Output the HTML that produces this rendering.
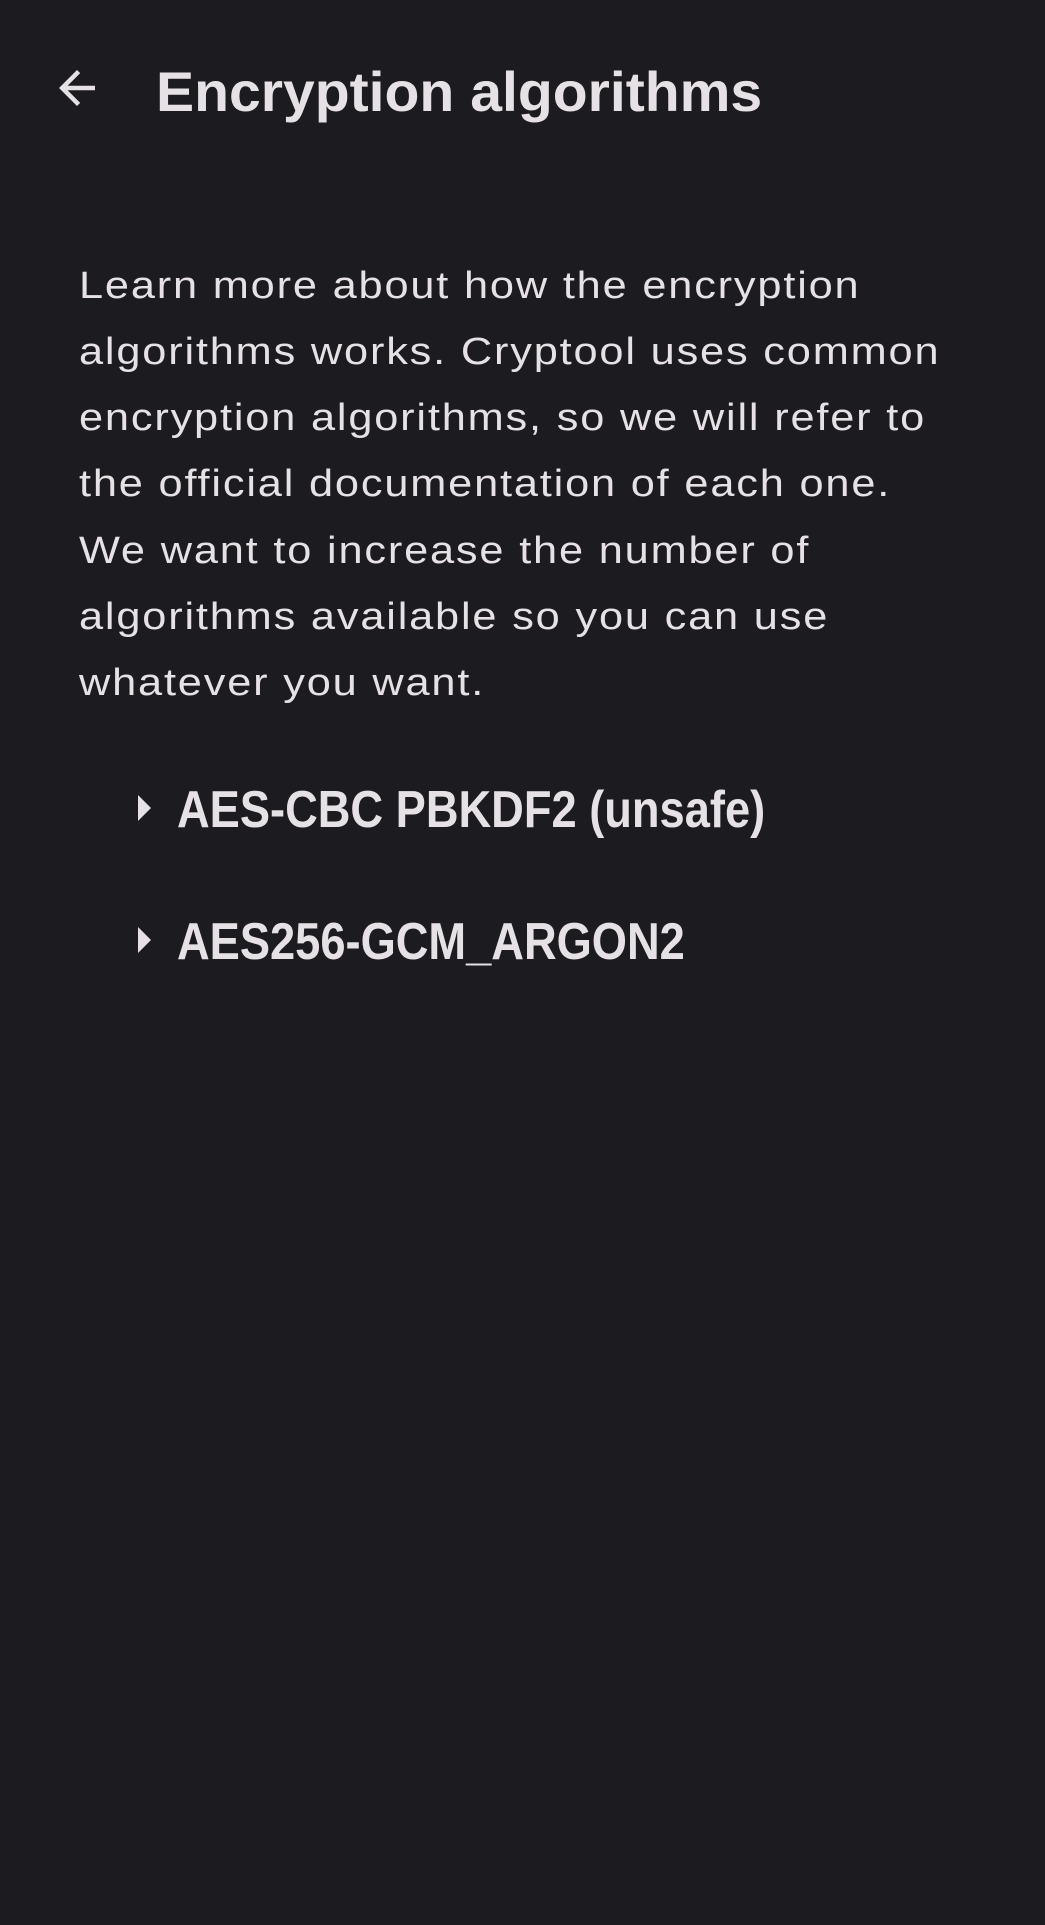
<!DOCTYPE html>
<html><head><meta charset="utf-8"><style>
html,body{margin:0;padding:0;background:#1c1b1f;}
body{width:1045px;height:1925px;position:relative;overflow:hidden;color:#e6e1e5;font-family:"Liberation Sans",sans-serif;}
.t{position:absolute;white-space:nowrap;}
#title{left:156px;top:64px;font-size:56px;font-weight:bold;line-height:1;transform-origin:left top;transform:scaleX(1.02);}
.p{left:79px;font-size:38px;letter-spacing:1.6px;line-height:1;transform-origin:left top;transform:scaleX(1.14);}
.it{left:177px;font-size:52px;font-weight:bold;line-height:1;transform-origin:left top;transform:scaleX(0.87);}
.tri{position:absolute;width:0;height:0;border-top:13px solid transparent;border-bottom:13px solid transparent;border-left:13px solid #e6e1e5;}
</style></head><body>
<svg style="position:absolute;left:50px;top:61px" width="54" height="54" viewBox="0 0 24 24"><path d="M20 11H7.83l5.59-5.59L12 4l-8 8 8 8 1.41-1.41L7.83 13H20v-2z" fill="#e6e1e5"/></svg>
<div class="t" id="title">Encryption algorithms</div>
<div class="t p" style="top:267px">Learn more about how the encryption</div>
<div class="t p" style="top:333px">algorithms works. Cryptool uses common</div>
<div class="t p" style="top:399px">encryption algorithms, so we will refer to</div>
<div class="t p" style="top:465px">the official documentation of each one.</div>
<div class="t p" style="top:532px">We want to increase the number of</div>
<div class="t p" style="top:598px">algorithms available so you can use</div>
<div class="t p" style="top:664px">whatever you want.</div>
<div class="tri" style="left:138px;top:795px"></div>
<div class="t it" style="top:784px">AES-CBC PBKDF2 (unsafe)</div>
<div class="tri" style="left:138px;top:927px"></div>
<div class="t it" style="top:916px">AES256-GCM_ARGON2</div>
</body></html>
